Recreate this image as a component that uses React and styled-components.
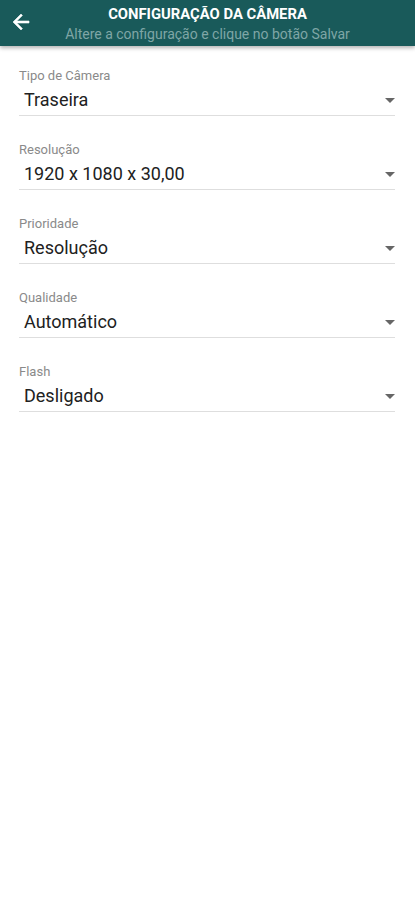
import React from "react";
import styled, { createGlobalStyle } from "styled-components";

const Global = createGlobalStyle`
  html, body { margin: 0; padding: 0; background: #ffffff; }
  body { font-family: Roboto, "Noto Sans", "Liberation Sans", sans-serif; }
  * { box-sizing: border-box; }
`;

const Page = styled.div`
  width: 415px;
  min-height: 900px;
  background: #fff;
`;

const Header = styled.header`
  position: relative;
  height: 46px;
  background: #195a5a;
  box-shadow: 0 2px 4px rgba(0, 0, 0, 0.3);
  display: flex;
  align-items: center;
`;

const BackButton = styled.button`
  position: absolute;
  left: 9px;
  top: 10px;
  width: 24px;
  height: 24px;
  padding: 0;
  border: 0;
  background: transparent;
  display: flex;
  align-items: center;
  justify-content: center;
`;

const Titles = styled.div`
  flex: 1;
  display: flex;
  flex-direction: column;
  align-items: center;
  padding-top: 2px;
`;

const Title = styled.div`
  color: #ffffff;
  font-size: 14.8px;
  font-weight: 700;
  line-height: 20px;
`;

const Subtitle = styled.div`
  color: #7fa6a6;
  font-size: 14px;
  line-height: 20px;
`;

const Form = styled.div`
  display: flex;
  flex-direction: column;
  padding: 22px 20px 0 19px;
`;

const Field = styled.div`
  display: flex;
  flex-direction: column;
  height: 74px;
`;

const Label = styled.div`
  color: #8a8a8a;
  font-size: 13px;
  line-height: 15px;
`;

const SelectRow = styled.div`
  display: flex;
  align-items: center;
  justify-content: space-between;
  height: 33px;
  border-bottom: 1px solid #dedede;
  padding-left: 5px;
`;

const Value = styled.div`
  color: #212121;
  font-size: 18px;
  line-height: 20px;
  padding-top: 2px;
`;

const Caret = styled.span`
  width: 0;
  height: 0;
  border-left: 5px solid transparent;
  border-right: 5px solid transparent;
  border-top: 5px solid #666;
  margin-top: 2px;
`;

const fields = [
  { label: "Tipo de Câmera", value: "Traseira" },
  { label: "Resolução", value: "1920 x 1080 x 30,00" },
  { label: "Prioridade", value: "Resolução" },
  { label: "Qualidade", value: "Automático" },
  { label: "Flash", value: "Desligado" },
];

export default function App() {
  return (
    <Page>
      <Global />
      <Header>
        <BackButton aria-label="Voltar">
          <svg width="24" height="24" viewBox="0 0 24 24">
            <path
              d="M20 11H7.83l5.59-5.59L12 4l-8 8 8 8 1.41-1.41L7.83 13H20v-2z"
              fill="#ffffff"
              stroke="#ffffff"
              strokeWidth="0.6"
            />
          </svg>
        </BackButton>
        <Titles>
          <Title>CONFIGURAÇÃO DA CÂMERA</Title>
          <Subtitle>Altere a configuração e clique no botão Salvar</Subtitle>
        </Titles>
      </Header>
      <Form>
        {fields.map((f) => (
          <Field key={f.label}>
            <Label>{f.label}</Label>
            <SelectRow>
              <Value>{f.value}</Value>
              <Caret />
            </SelectRow>
          </Field>
        ))}
      </Form>
    </Page>
  );
}
